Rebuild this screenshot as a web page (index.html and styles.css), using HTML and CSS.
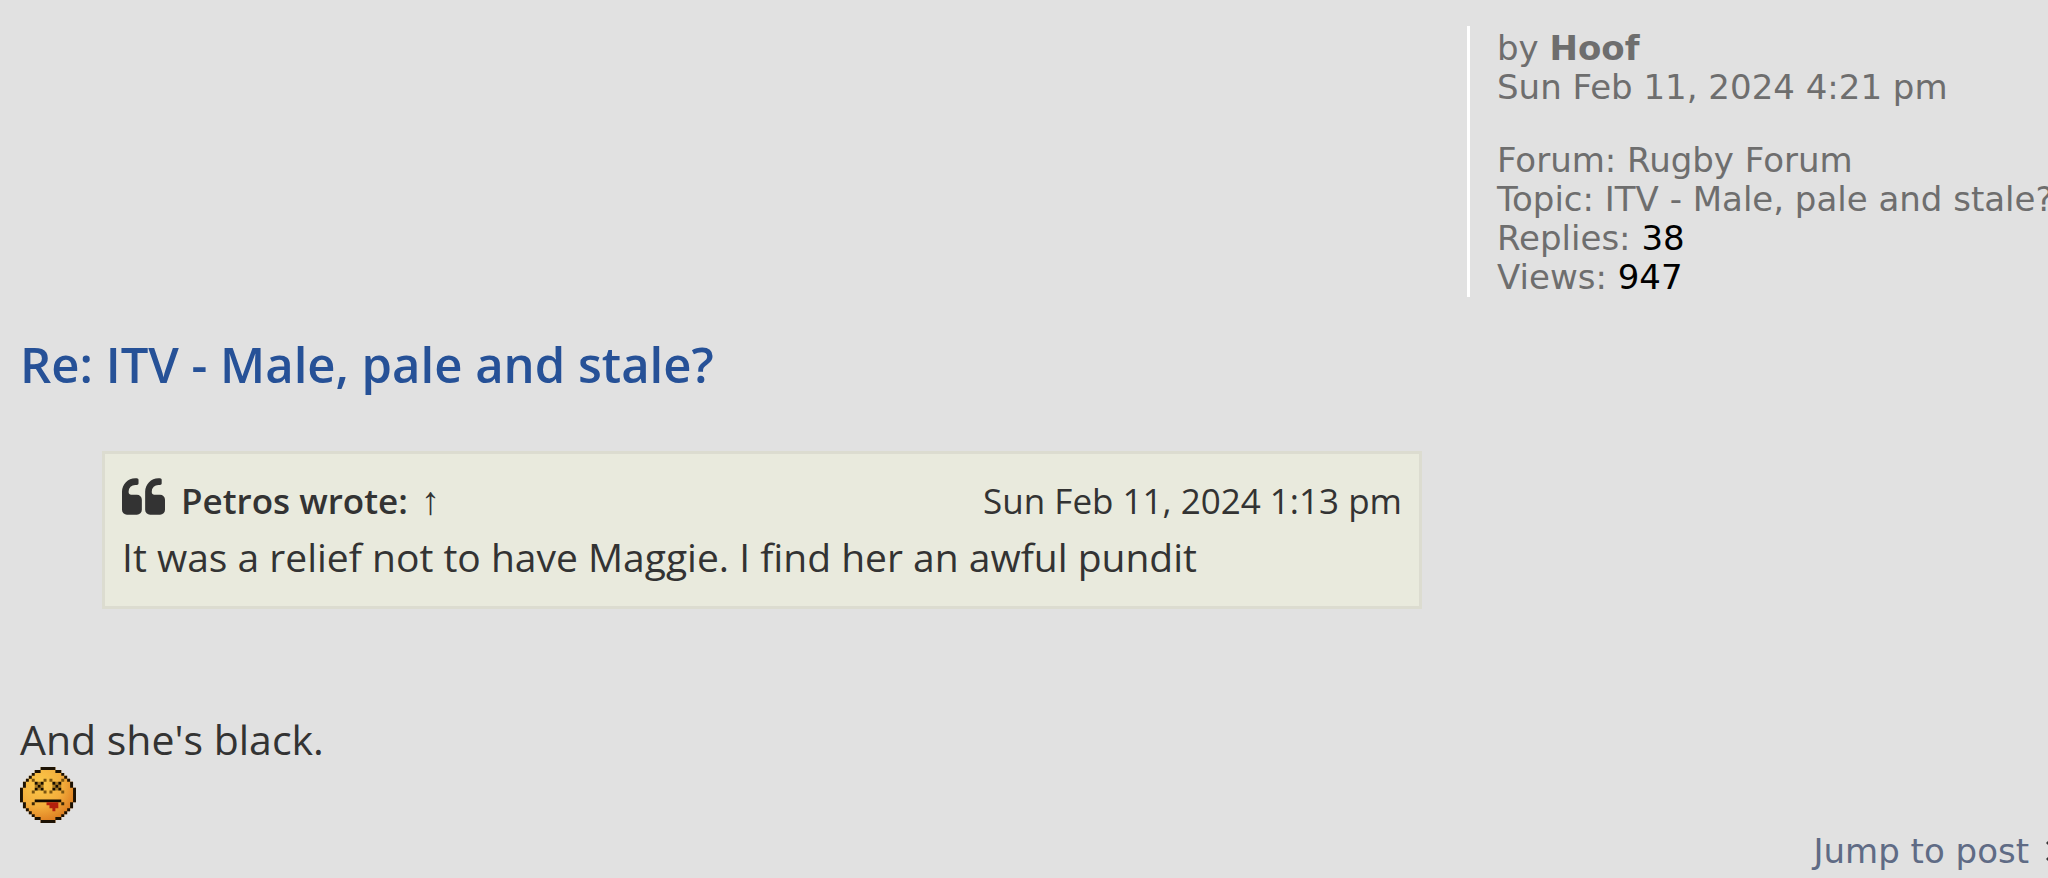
FILE: index.html
```html
<!DOCTYPE html>
<html lang="en">
<head>
<meta charset="utf-8">
<title>Re: ITV - Male, pale and stale?</title>
<link rel="stylesheet" href="styles.css">
</head>
<body>
<main class="post">
  <dl class="profile">
    <dt class="author">by <strong>Hoof</strong></dt>
    <dd class="date">Sun Feb 11, 2024 4:21 pm</dd>
    <dd>Forum: Rugby Forum</dd>
    <dd>Topic: ITV - Male, pale and stale?</dd>
    <dd>Replies: <span class="count">38</span></dd>
    <dd>Views: <span class="count">947</span></dd>
  </dl>
  <article class="body">
    <h3 class="title"><a href="#post">Re: ITV - Male, pale and stale?</a></h3>
    <blockquote class="quote">
      <div class="cite">
        <svg class="mark" viewBox="0 0 1664 1408" aria-hidden="true"><path id="q" d="M768 832v384q0 80-56 136t-136 56h-384q-80 0-136-56t-56-136v-704q0-104 40.500-198.500t109.500-163.500 163.500-109.500 198.500-40.500h64q26 0 45 19t19 45v128q0 26-19 45t-45 19h-64q-106 0-181 75t-75 181v32q0 40 28 68t68 28h224q80 0 136 56t56 136z"/><use href="#q" x="896"/></svg>
        <cite class="who">Petros wrote: <a class="up" href="#quoted" aria-label="Go to quoted post">↑</a></cite>
        <time class="when">Sun Feb 11, 2024 1:13 pm</time>
      </div>
      <p class="said">It was a relief not to have Maggie. I find her an awful pundit</p>
    </blockquote>
    <p class="text">And she's black.</p>
    <svg class="smiley" viewBox="0 0 19 19" role="img" aria-label="Dizzy face">
      <defs><radialGradient id="face" cx="0.350" cy="0.300" r="0.750"><stop offset="0" stop-color="#fbc94a"/><stop offset="0.550" stop-color="#f3ad3b"/><stop offset="1" stop-color="#d9741c"/></radialGradient></defs>
      <path fill="url(#face)" d="M7 0h5v1h2v1h1v1h1v1h1v1h1v2h1v5h-1v2h-1v1h-1v1h-1v1h-1v1h-2v1h-5v-1h-2v-1h-1v-1h-1v-1h-1v-1h-1v-2h-1v-5h1v-2h1v-1h1v-1h1v-1h1v-1h2z"/>
      <path fill="#1c1204" d="M7 0h5v1h-5zM5 1h2v1h-2zM12 1h2v1h-2zM4 2h1v1h-1zM14 2h1v1h-1zM3 3h1v1h-1zM15 3h1v1h-1zM2 4h1v1h-1zM16 4h1v1h-1zM1 5h1v2h-1zM17 5h1v2h-1zM0 7h1v5h-1zM18 7h1v5h-1zM1 12h1v2h-1zM17 12h1v2h-1zM2 14h1v1h-1zM16 14h1v1h-1zM3 15h1v1h-1zM15 15h1v1h-1zM4 16h1v1h-1zM14 16h1v1h-1zM5 17h2v1h-2zM12 17h2v1h-2zM7 18h5v1h-5z"/>
      <path fill="#7a5410" d="M4 4h1v1h-1zM8 4h1v1h-1zM4 8h1v1h-1zM8 8h1v1h-1zM10 4h1v1h-1zM14 4h1v1h-1zM10 8h1v1h-1zM14 8h1v1h-1z"/>
      <path fill="#3c2806" d="M4 12h1v1h-1zM14 12h1v1h-1z"/>
      <path fill="#a87820" d="M6 5h1v1h-1zM5 6h1v1h-1zM7 6h1v1h-1zM6 7h1v1h-1zM12 5h1v1h-1zM11 6h1v1h-1zM13 6h1v1h-1zM12 7h1v1h-1z"/>
      <path fill="#140c00" d="M5 5h1v1h-1zM7 5h1v1h-1zM6 6h1v1h-1zM5 7h1v1h-1zM7 7h1v1h-1zM11 5h1v1h-1zM13 5h1v1h-1zM12 6h1v1h-1zM11 7h1v1h-1zM13 7h1v1h-1zM5 11h9v1h-9z"/>
      <path fill="#b4200c" d="M9 12h4v2h-1v1h-1v-1h-1v-1h-1z"/>
    </svg>
  </article>
  <a class="jump" href="#post"><span>Jump to post</span><svg class="chevron" viewBox="0 0 12 20" aria-hidden="true"><path d="M1 1l9 9-9 9"/></svg></a>
</main>
</body>
</html>
```
FILE: styles.css
```css
* { box-sizing: border-box; }
body {
  margin: 0;
  background: #e1e1e1;
  color: #333;
  font-family: "Trebuchet MS", "Open Sans", sans-serif;
  overflow: hidden;
}
a { color: inherit; text-decoration: none; }
p, dl, dd, h3, blockquote { margin: 0; }
.post {
  display: grid;
  grid-template-columns: minmax(0, 1447fr) minmax(0, 581fr);
  padding: 26px 0 0 20px;
}
.profile {
  grid-column: 2;
  padding: 3px 0 0 27px;
  border-left: 3px solid #fff;
  color: #6e6e6e;
  font: 34px/39px Verdana, "DejaVu Sans", sans-serif;
  white-space: nowrap;
}
.date { margin-bottom: 34px; }
.count { color: #000; }
.body { grid-column: 1; grid-row: 2; padding-right: 45px; }
.title {
  margin-top: 32px;
  color: #265197;
  font-size: 49px;
  line-height: 70px;
  font-weight: 600;
}
.quote {
  margin: 52px 0 0 82px;
  padding: 19px 17px 21px;
  border: 3px solid #dcdcd0;
  background: #e9eadd;
}
.cite { display: flex; align-items: center; line-height: 56px; font-size: 35px; }
.mark { width: 43px; height: 37px; fill: #333; margin: 0 16px 10px 0; }
.who { font-style: normal; font-weight: 600; }
.up { margin-left: 4px; font-weight: 400; font-size: 39px; font-family: "Liberation Serif", serif; }
.when { margin-left: auto; }
.said { font-size: 39px; line-height: 56px; }
.text { margin-top: 102px; font-size: 41px; line-height: 56px; }
.smiley { display: block; width: 56px; height: 56px; }
.jump {
  grid-column: 2;
  grid-row: 3;
  justify-self: end;
  display: flex;
  align-items: center;
  gap: 17px;
  margin: 8px -10px 0 0;
  color: #5f6b85;
  font: 34px/40px Verdana, "DejaVu Sans", sans-serif;
}
.chevron { width: 12px; height: 20px; fill: none; stroke: #333; stroke-width: 3px; }
```
